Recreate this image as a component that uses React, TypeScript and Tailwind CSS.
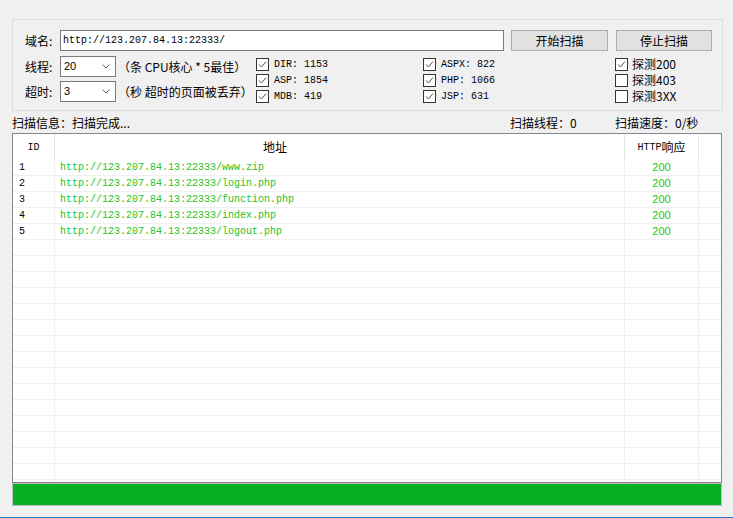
import React from "react"

const cjk = { fontFamily: '"Noto Sans CJK SC", "Microsoft YaHei", sans-serif' }
const mono = { fontFamily: '"Liberation Mono", "DejaVu Sans Mono", "Noto Sans CJK SC", monospace' }

const rows = [
  { id: "1", url: "http://123.207.84.13:22333/www.zip", code: "200" },
  { id: "2", url: "http://123.207.84.13:22333/login.php", code: "200" },
  { id: "3", url: "http://123.207.84.13:22333/function.php", code: "200" },
  { id: "4", url: "http://123.207.84.13:22333/index.php", code: "200" },
  { id: "5", url: "http://123.207.84.13:22333/logout.php", code: "200" },
]

function CheckBox({ checked }: { checked: boolean }) {
  return (
    <svg width="13" height="13" viewBox="0 0 13 13" className="shrink-0">
      <rect x="0.5" y="0.5" width="12" height="12" fill="#fff" stroke="#333" />
      {checked && <polyline points="3,6.5 5.5,9 10,3.5" fill="none" stroke="#555" strokeWidth="1" />}
    </svg>
  )
}

function Check({ label, checked, cn }: { label: string; checked: boolean; cn?: boolean }) {
  return (
    <div className="flex items-center h-[16px]">
      <CheckBox checked={checked} />
      <span className={cn ? "ml-[4px] text-[12px] text-black" : "ml-[5px] text-[10px] text-black"} style={cn ? cjk : mono}>
        {label}
      </span>
    </div>
  )
}

function Combo({ value }: { value: string }) {
  return (
    <div className="w-[56px] h-[21px] bg-white border border-[#7a7a7a] flex items-center justify-between pl-[3px] pr-[5px]">
      <span className="text-[11px] text-black" style={{ fontFamily: '"Liberation Sans", Arial, sans-serif' }}>{value}</span>
      <svg width="8" height="5" viewBox="0 0 8 5">
        <polyline points="0.5,0.5 4,4 7.5,0.5" fill="none" stroke="#606060" strokeWidth="1" />
      </svg>
    </div>
  )
}

export default function App() {
  const empty = Array.from({ length: 16 })
  return (
    <div className="w-[733px] h-[518px] bg-[#f0f0f0] flex flex-col overflow-hidden text-black">
      <div className="pt-[19px] pl-[12px]">
        {/* settings group */}
        <div className="w-[711px] h-[92px] border border-[#dcdcdc] pt-[10px]">
          <div className="flex items-center h-[21px]">
            <div className="w-[47px] pl-[12px] text-[12px]" style={cjk}>域名:</div>
            <div className="w-[444px] h-[21px] bg-white border border-[#7a7a7a] flex items-center pl-[2px] text-[10px]" style={mono}>
              http://123.207.84.13:22333/
            </div>
            <button className="ml-[7px] w-[97px] h-[21px] bg-[#e1e1e1] border border-[#adadad] text-[12px]" style={cjk}>开始扫描</button>
            <button className="ml-[8px] w-[96px] h-[21px] bg-[#e1e1e1] border border-[#adadad] text-[12px]" style={cjk}>停止扫描</button>
          </div>
          <div className="flex items-start mt-[5px]">
            <div className="w-[243px] flex flex-col gap-[4px]">
              <div className="flex items-center h-[21px]">
                <div className="w-[47px] pl-[12px] text-[12px]" style={cjk}>线程:</div>
                <Combo value="20" />
                <span className="ml-[2px] text-[12px] whitespace-nowrap" style={cjk}>（条 CPU核心 * 5最佳）</span>
              </div>
              <div className="flex items-center h-[21px]">
                <div className="w-[47px] pl-[12px] text-[12px]" style={cjk}>超时:</div>
                <Combo value="3" />
                <span className="ml-[2px] text-[12px] whitespace-nowrap" style={cjk}>（秒 超时的页面被丢弃）</span>
              </div>
            </div>
            <div className="w-[167px] flex flex-col">
              <Check label="DIR: 1153" checked />
              <Check label="ASP: 1854" checked />
              <Check label="MDB: 419" checked />
            </div>
            <div className="w-[192px] flex flex-col">
              <Check label="ASPX: 822" checked />
              <Check label="PHP: 1066" checked />
              <Check label="JSP: 631" checked />
            </div>
            <div className="flex flex-col">
              <Check label="探测200" checked cn />
              <Check label="探测403" checked={false} cn />
              <Check label="探测3XX" checked={false} cn />
            </div>
          </div>
        </div>

        {/* status */}
        <div className="h-[22px] pt-[2px] flex items-center text-[12px] whitespace-nowrap" style={cjk}>
          <span className="w-[498px]">扫描信息：扫描完成...</span>
          <span className="w-[105px]">扫描线程：0</span>
          <span>扫描速度：0/秒</span>
        </div>

        {/* result table */}
        <div className="w-[710px] h-[350px] border border-[#828790] bg-white flex flex-col overflow-hidden">
          <div className="flex h-[26px] shrink-0 items-center">
            <div className="w-[42px] h-full border-r border-[#e5e5e5] flex items-center justify-center text-[10px]" style={mono}>ID</div>
            <div className="w-[570px] h-full border-r border-[#e5e5e5] flex items-center pl-[208px] text-[12px]" style={cjk}>地址</div>
            <div className="w-[74px] h-full border-r border-[#e5e5e5] flex items-center justify-center">
              <span className="text-[10px]" style={mono}>HTTP</span>
              <span className="text-[12px]" style={cjk}>响应</span>
            </div>
            <div className="flex-1" />
          </div>
          {rows.map((r) => (
            <div key={r.id} className="flex h-[16px] shrink-0 border-b border-[#f0f0f0]">
              <div className="w-[42px] border-r border-[#f0f0f0] pl-[6px] flex items-center text-[10px]" style={mono}>{r.id}</div>
              <div className="w-[570px] border-r border-[#f0f0f0] pl-[5px] flex items-center text-[10px] text-[#22c422]" style={mono}>{r.url}</div>
              <div className="w-[74px] border-r border-[#f0f0f0] flex items-center justify-center text-[11px] text-[#22c422]" style={{ fontFamily: '"Liberation Sans", Arial, sans-serif' }}>{r.code}</div>
              <div className="flex-1" />
            </div>
          ))}
          {empty.map((_, i) => (
            <div key={i} className="flex h-[16px] shrink-0 border-b border-[#f0f0f0]">
              <div className="w-[42px] border-r border-[#f0f0f0]" />
              <div className="w-[570px] border-r border-[#f0f0f0]" />
              <div className="w-[74px] border-r border-[#f0f0f0]" />
              <div className="flex-1" />
            </div>
          ))}
        </div>

        {/* progress */}
        <div className="w-[710px] h-[23px] bg-[#06b025] border border-[#bcbcbc]" />
      </div>
      <div className="mt-auto h-[1px] w-full bg-[#2b79c9]" />
    </div>
  )
}
